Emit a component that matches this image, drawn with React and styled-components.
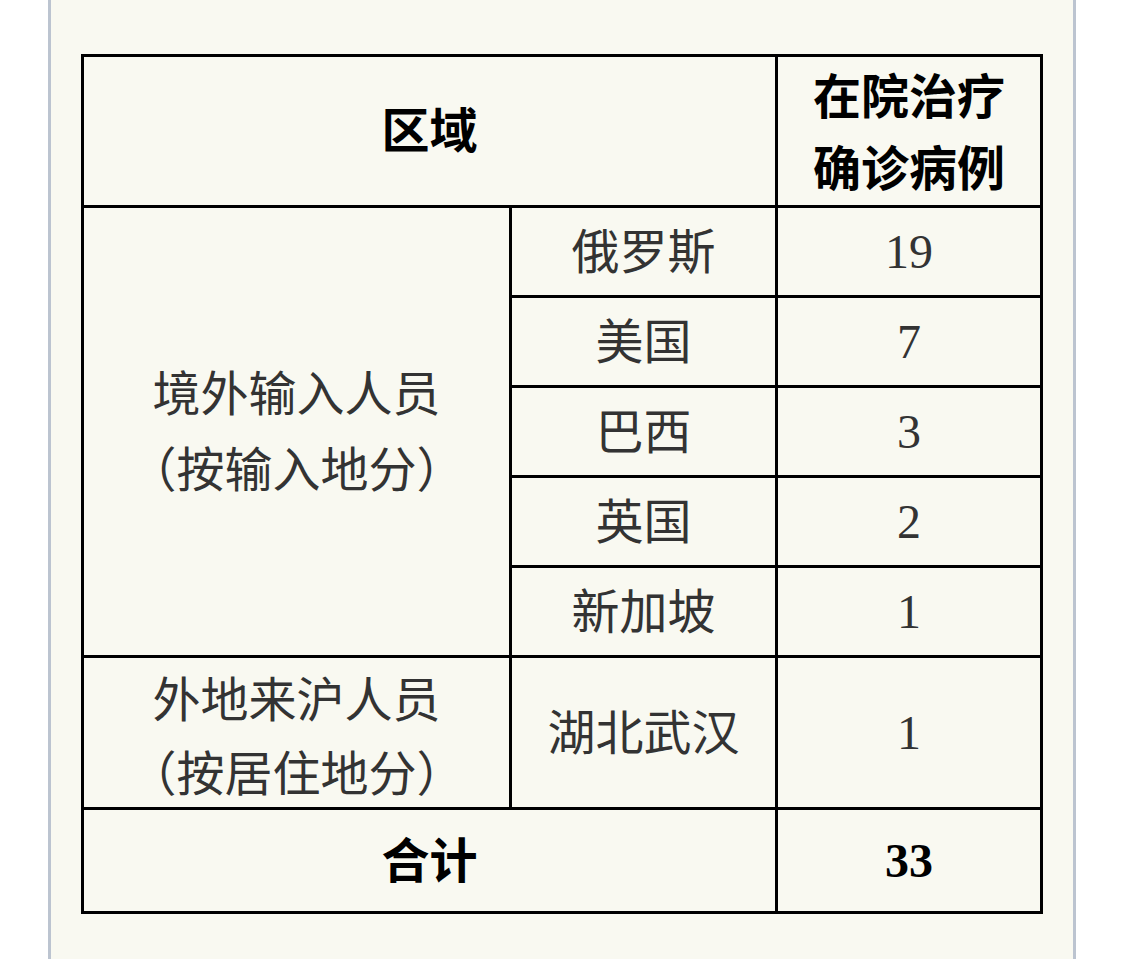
import React from "react";
import styled, { createGlobalStyle } from "styled-components";

const GlobalStyle = createGlobalStyle`
  html, body {
    margin: 0;
    padding: 0;
    background: #ffffff;
  }
  body {
    font-family: "Noto Sans CJK SC", "Noto Sans", sans-serif;
  }
`;

const Panel = styled.div`
  box-sizing: border-box;
  margin-left: 48px;
  width: 1028px;
  min-height: 959px;
  padding: 54px 30px 0 30px;
  background: #f9f9f1;
  border-left: 3px solid #bcc4d0;
  border-right: 3px solid #bcc4d0;
`;

const Table = styled.table`
  border-collapse: collapse;
  table-layout: fixed;
  width: 962px;
  border: 3px solid #000;
`;

const Row = styled.tr`
  height: ${(p) => p.$h}px;
`;

const Cell = styled.td`
  border: 3px solid #000;
  padding: 0 0 ${(p) => (p.$num ? 0 : p.$pb ?? 8)}px 0;
  text-align: center;
  vertical-align: middle;
  font-size: 48px;
  line-height: ${(p) => p.$lh || 72}px;
  color: ${(p) => (p.$head ? "#000" : "#333")};
  font-weight: ${(p) => (p.$head ? 700 : 400)};
  font-family: ${(p) =>
    p.$num
      ? `"Liberation Serif", "Times New Roman", serif`
      : `"Noto Sans CJK SC", "Noto Sans", sans-serif`};
`;

const Line = styled.div`
  white-space: nowrap;
`;

const Paren = styled.span`
  font-feature-settings: "halt" 1;
`;

const countries = [
  ["俄罗斯", 19],
  ["美国", 7],
  ["巴西", 3],
  ["英国", 2],
  ["新加坡", 1],
];

const Note = ({ children }) => (
  <Line>
    <Paren>（</Paren>
    {children}
    <Paren>）</Paren>
  </Line>
);

export default function App() {
  return (
    <>
      <GlobalStyle />
      <Panel>
        <Table>
          <colgroup>
            <col style={{ width: 428 }} />
            <col style={{ width: 266 }} />
            <col style={{ width: 265 }} />
          </colgroup>
          <tbody>
            <Row $h={151}>
              <Cell $head colSpan={2}>区域</Cell>
              <Cell $head $pb={4}>
                <Line>在院治疗</Line>
                <Line>确诊病例</Line>
              </Cell>
            </Row>
            {countries.map(([name, n], i) => (
              <Row $h={90} key={name}>
                {i === 0 && (
                  <Cell rowSpan={countries.length} $lh={76}>
                    <Line>境外输入人员</Line>
                    <Note>按输入地分</Note>
                  </Cell>
                )}
                <Cell>{name}</Cell>
                <Cell $num>{n}</Cell>
              </Row>
            ))}
            <Row $h={152}>
              <Cell $pb={0} $lh={74}>
                <Line>外地来沪人员</Line>
                <Note>按居住地分</Note>
              </Cell>
              <Cell>湖北武汉</Cell>
              <Cell $num>1</Cell>
            </Row>
            <Row $h={104}>
              <Cell $head colSpan={2}>合计</Cell>
              <Cell $head $num>33</Cell>
            </Row>
          </tbody>
        </Table>
      </Panel>
    </>
  );
}
